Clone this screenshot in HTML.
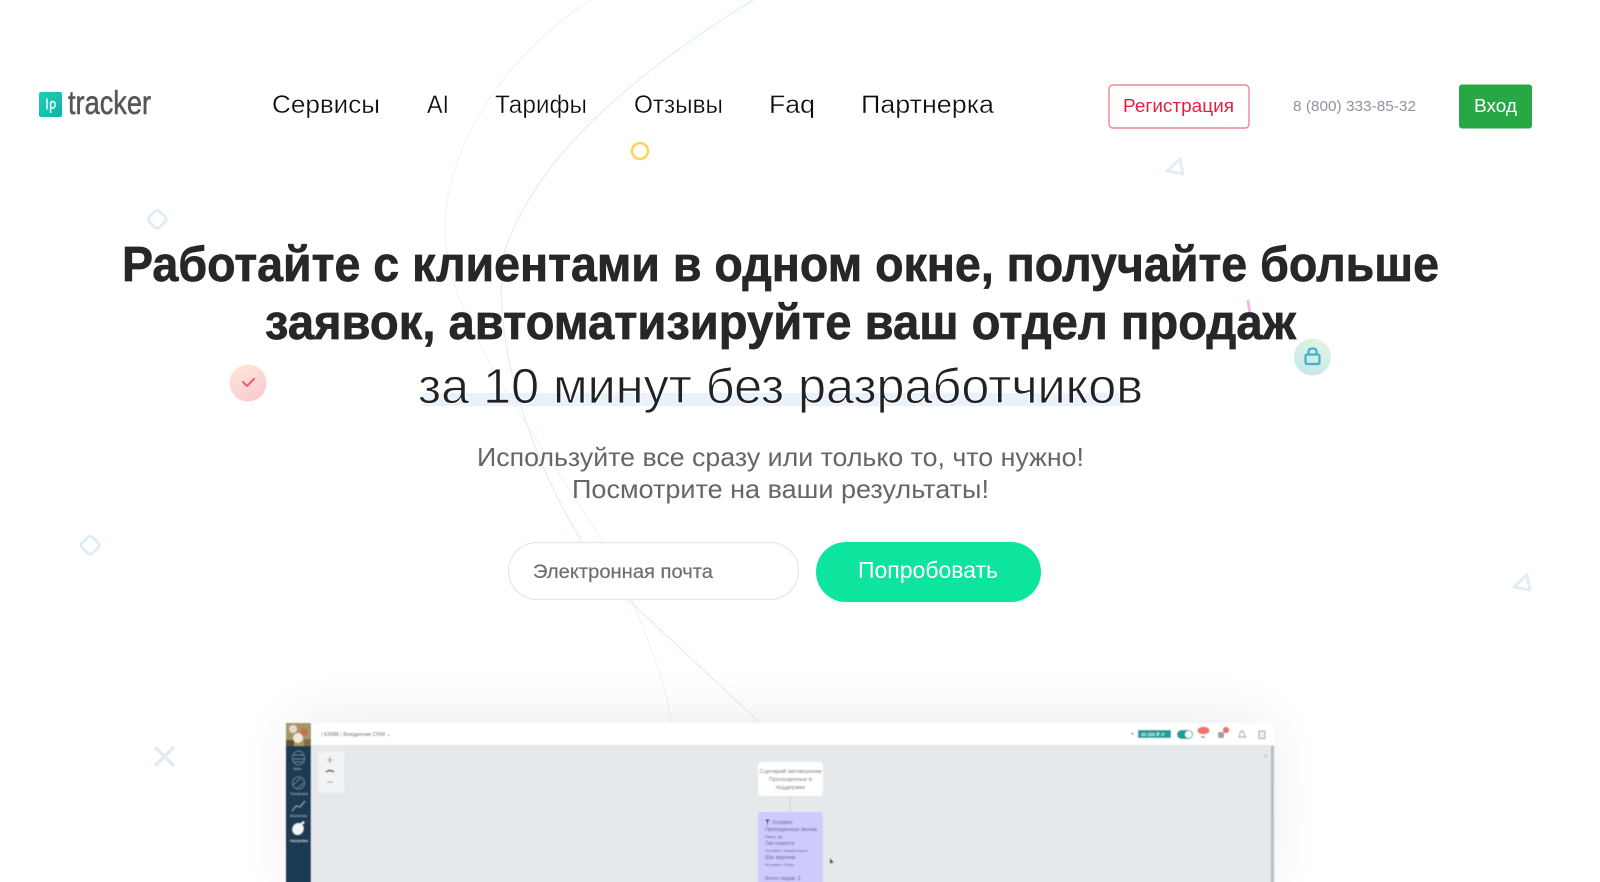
<!DOCTYPE html>
<html lang="ru">
<head>
<meta charset="utf-8">
<title>LPTracker</title>
<style>
html,body{margin:0;padding:0;background:#fff;width:1600px;height:882px;overflow:hidden}
svg{display:block;position:absolute;left:0;top:0;overflow:hidden}
text{font-family:"Liberation Sans","DejaVu Sans",sans-serif}
</style>
</head>
<body>
<svg width="1600" height="882" viewBox="0 0 1600 882" xmlns="http://www.w3.org/2000/svg">
<defs>
<linearGradient id="pk" x1="0.2" y1="0" x2="0.8" y2="1"><stop offset="0" stop-color="#fde6d8"/><stop offset="1" stop-color="#fcc8d2"/></linearGradient>
<linearGradient id="tl" x1="0.7" y1="0" x2="0.3" y2="1"><stop offset="0" stop-color="#e0f5df"/><stop offset="1" stop-color="#c5e6ee"/></linearGradient>
<linearGradient id="lg" x1="0" y1="0" x2="1" y2="1"><stop offset="0" stop-color="#1fcfb8"/><stop offset="1" stop-color="#0bb5a5"/></linearGradient>
<filter id="sh" x="-20%" y="-50%" width="140%" height="200%"><feGaussianBlur stdDeviation="30"/></filter>
<filter id="b1" x="-5%" y="-5%" width="110%" height="110%"><feGaussianBlur stdDeviation="0.6"/></filter>
<filter id="b0"><feGaussianBlur stdDeviation="0.3"/></filter>
<clipPath id="page"><rect x="0" y="0" width="1600" height="882"/></clipPath>
</defs>

<!-- background curves -->
<path d="M753 0C640 70 540 150 505 250C490 320 520 440 582 542C600 572 620 592 634 605L759 722" fill="none" stroke="#dcf5dc" stroke-width="1.2"/>
<path d="M590 0C500 60 445 150 445 230C445 320 540 440 603 542C620 570 628 590 634 605C652 650 668 690 671 722" fill="none" stroke="#f0f2f0" stroke-width="1.1"/>

<!-- logo -->
<g filter="url(#b0)">
<rect x="39" y="92" width="23" height="25" rx="2" fill="url(#lg)"/>
<path d="M47 98.5V109.5" stroke="#d8f6f1" stroke-width="1.7" fill="none"/>
<path d="M50.6 113V103.5Q50.6 101.6 52.6 101.6Q55.2 101.6 55.2 104.6Q55.2 108 52.6 108Q51.4 108 50.6 107.3" stroke="#d8f6f1" stroke-width="1.7" fill="none"/>
<text x="68" y="114" font-size="33" fill="#565656" textLength="83" lengthAdjust="spacingAndGlyphs" stroke="#565656" stroke-width=".5">tracker</text>
</g>

<!-- nav -->
<g font-size="25" fill="#111" stroke="#fff" stroke-width=".3" filter="url(#b0)">
<text x="272" y="113" textLength="108" lengthAdjust="spacingAndGlyphs">Сервисы</text>
<text x="427" y="113" textLength="22" lengthAdjust="spacingAndGlyphs">AI</text>
<text x="495" y="113" textLength="92" lengthAdjust="spacingAndGlyphs">Тарифы</text>
<text x="634" y="113" textLength="89" lengthAdjust="spacingAndGlyphs">Отзывы</text>
<text x="769" y="113" textLength="46" lengthAdjust="spacingAndGlyphs">Faq</text>
<text x="861" y="113" textLength="133" lengthAdjust="spacingAndGlyphs">Партнерка</text>
</g>

<rect x="1109" y="85" width="140" height="43" rx="4" fill="#fff" stroke="#ec8791" stroke-width="1.4"/>
<text x="1123" y="112" font-size="18" fill="#e0223c" textLength="111" lengthAdjust="spacingAndGlyphs">Регистрация</text>
<text x="1293" y="111" font-size="15" fill="#8f93a3" textLength="123" lengthAdjust="spacingAndGlyphs">8 (800) 333-85-32</text>
<rect x="1459" y="84.5" width="73" height="44" rx="3" fill="#28a745"/>
<text x="1474" y="112" font-size="18" fill="#fff" textLength="43" lengthAdjust="spacingAndGlyphs">Вход</text>

<!-- decorative shapes -->
<circle cx="640" cy="151" r="8" fill="none" stroke="#fdd35c" stroke-width="2.6"/>
<path d="M1180 159L1183 174L1167 171Z" fill="none" stroke="#e2eef4" stroke-width="3" stroke-linejoin="round"/>
<path d="M1527 575L1530 590L1514 587Z" fill="none" stroke="#e2eef4" stroke-width="3" stroke-linejoin="round"/>
<rect x="150" y="212" width="14.5" height="14.5" rx="3" transform="rotate(45 157.2 219.2)" fill="none" stroke="#deedf5" stroke-width="2.8"/>
<rect x="83" y="538" width="14.5" height="14.5" rx="3" transform="rotate(45 90.2 545.2)" fill="none" stroke="#deedf5" stroke-width="2.8"/>
<path d="M155 747L174 766M174 747L155 766" stroke="#dfecf2" stroke-width="3.6" fill="none"/>
<path d="M1248 301L1250 314" stroke="#fdb2ec" stroke-width="2.8" stroke-linecap="round"/>

<circle cx="248" cy="383" r="18.5" fill="url(#pk)"/>
<path d="M243 382L247 386L254 379" fill="none" stroke="#f2586f" stroke-width="2" stroke-linecap="round" stroke-linejoin="round"/>
<circle cx="1312.5" cy="357" r="18.5" fill="url(#tl)"/>
<rect x="1305.5" y="354.5" width="14" height="9.5" rx="1.5" fill="none" stroke="#3fb4c6" stroke-width="2.2"/>
<path d="M1308.5 354V351.5Q1308.5 348.5 1312.5 348.5Q1316.5 348.5 1316.5 351.5V354" fill="none" stroke="#3fb4c6" stroke-width="2.2"/>

<!-- headline -->
<g font-size="49" font-weight="700" fill="#272727" stroke="#272727" stroke-width=".7">
<text x="122" y="281" textLength="1317" lengthAdjust="spacingAndGlyphs">Работайте с клиентами в одном окне, получайте больше</text>
<text x="265" y="339" textLength="1031" lengthAdjust="spacingAndGlyphs">заявок, автоматизируйте ваш отдел продаж</text>
</g>
<rect x="422" y="393" width="702" height="13" rx="3" fill="#e8f1fc"/>
<text x="418" y="403" font-size="49" fill="#222" stroke="#fff" stroke-width=".8" textLength="725" lengthAdjust="spacingAndGlyphs">за 10 минут без разработчиков</text>

<!-- subtitle -->
<g font-size="26" fill="#666">
<text x="477" y="466" textLength="607" lengthAdjust="spacingAndGlyphs">Используйте все сразу или только то, что нужно!</text>
<text x="572" y="498" textLength="417" lengthAdjust="spacingAndGlyphs">Посмотрите на ваши результаты!</text>
</g>

<!-- form -->
<rect x="508.5" y="542.5" width="290" height="57" rx="28.5" fill="#fff" stroke="#e6e6e6" stroke-width="1.2"/>
<text x="533" y="578" font-size="19" fill="#6f6f6f" stroke="#6f6f6f" stroke-width=".2" textLength="180" lengthAdjust="spacingAndGlyphs">Электронная почта</text>
<rect x="816" y="542" width="225" height="60" rx="30" fill="#0de59f"/>
<text x="858" y="578" font-size="23" fill="#fff" textLength="140" lengthAdjust="spacingAndGlyphs">Попробовать</text>

<!-- app screenshot -->
<g clip-path="url(#page)">
<rect x="296" y="723" width="969" height="159" fill="#000" opacity=".09" filter="url(#sh)"/>
</g>
<path d="M759 722L742 706" stroke="#dcf5dc" stroke-width="1.2" fill="none"/>
<g clip-path="url(#page)">
<g filter="url(#b1)">
<rect x="286" y="723" width="989" height="165" fill="#e5e9ec"/>
<rect x="286" y="723" width="989" height="22" fill="#fff"/>
<rect x="286" y="745" width="25" height="143" fill="#1b3a52"/>
<rect x="286" y="723" width="25" height="23" fill="#a8946a"/>
<circle cx="293" cy="729" r="4" fill="#e6dcc4"/>
<circle cx="304" cy="732" r="4" fill="#c9683e" opacity=".7"/>
<circle cx="298" cy="738" r="5" fill="#efe8d6"/>
<rect x="286" y="740" width="8" height="6" fill="#5d5230"/>
<rect x="304" y="739" width="7" height="7" fill="#7d7040"/>
<rect x="1271" y="746" width="2.5" height="142" fill="#b5b9bc"/>
<text x="321" y="736" font-size="5.8" fill="#555" textLength="70" lengthAdjust="spacingAndGlyphs">| 63086 | Внедрение CRM ⌄</text>

<!-- sidebar icons -->
<g fill="none" stroke="#5f7a8e" stroke-width="1">
<ellipse cx="298.5" cy="758" rx="6" ry="7"/>
<path d="M293 755H304M293 759H304M293 762H304"/>
<circle cx="298.5" cy="783" r="6"/>
<path d="M293 785L301 778M297 788L304 783"/>
<path d="M292 811L296 806L300 807L305 801" stroke="#8fa3b2"/>
</g>
<g font-size="3.4" fill="#a8b8c4">
<text x="293" y="770">Чаты</text>
<text x="290" y="795">Телефония</text>
<text x="290" y="817">Аналитика</text>
</g>
<ellipse cx="298" cy="829" rx="5.5" ry="6" fill="#f4f6f7" transform="rotate(30 298 829)"/>
<path d="M300 825L304 822" stroke="#f4f6f7" stroke-width="2"/>
<text x="290" y="842" font-size="3.6" fill="#e6ebef">Настройки</text>

<!-- zoom panel -->
<rect x="318" y="752" width="26" height="41" rx="1.5" fill="#f1f3f4"/>
<path d="M327 760H333M330 757V763M327 782H333" stroke="#9a9fa3" stroke-width="1" fill="none"/>
<path d="M326 772Q330 769 334 772" stroke="#444" stroke-width="1.4" fill="none"/>

<!-- flow nodes -->
<rect x="758" y="762" width="65" height="34" rx="4" fill="#fff"/>
<g font-size="5.8" fill="#666" text-anchor="middle">
<text x="790.5" y="773">Сценарий автоворонки</text>
<text x="790.5" y="781">Пропущенные в</text>
<text x="790.5" y="789">поддержке</text>
</g>
<rect x="789.5" y="796" width="1" height="16" fill="#cfd3d6"/>
<path d="M758 890V816Q758 812 762 812H819Q823 812 823 816V890Z" fill="#cfcafc"/>
<g fill="#57537e">
<path d="M765 819.5H770L768 821.5V825H767V821.5Z" fill="#333"/>
<text x="772" y="824" font-size="5.2">Условие:</text>
<text x="765" y="831" font-size="5.2">Пропущенные звонки</text>
<text x="765" y="838" font-size="3.8">Равно: Да</text>
<text x="765" y="845" font-size="5.2">Тип клиента</text>
<text x="765" y="852" font-size="3.8">Не равно: Новый клиент</text>
<text x="765" y="859" font-size="5.2">Шаг воронки</text>
<text x="765" y="866" font-size="3.8">Не равно: Отказ</text>
<text x="765" y="880" font-size="5.2">Всего лидов: 3</text>
</g>
<path d="M830 858L830 864L832 862.5L834 863Z" fill="#222"/>

<!-- top-right toolbar -->
<path d="M1131 733L1134 733L1132.5 735Z" fill="#666"/>
<rect x="1138" y="730" width="33" height="8" fill="#1f9d9a"/>
<text x="1141" y="736" font-size="4.6" font-weight="700" fill="#d6f0ef">30 286 ₽  ↺</text>
<rect x="1177" y="730" width="16" height="9" rx="4.5" fill="#1f9d9a"/>
<circle cx="1188.5" cy="734.5" r="3.6" fill="#fff"/>
<ellipse cx="1203.5" cy="730.5" rx="6" ry="3.8" fill="#f0726a"/>
<path d="M1201 736Q1203 738 1205 737" stroke="#667" stroke-width="1.2" fill="none"/>
<rect x="1218" y="732" width="6" height="6" fill="#9aa0a6"/>
<circle cx="1226" cy="730" r="3.2" fill="#f0726a"/>
<path d="M1239 737Q1240 735 1240 733Q1242 729 1244 733Q1244 735 1245.5 737Z" fill="none" stroke="#8a8f94" stroke-width=".9"/>
<rect x="1259" y="731" width="6" height="7.5" fill="#eceeef" stroke="#92979c" stroke-width=".9"/>
<path d="M1264 754L1267 757M1267 754L1264 757" stroke="#bdc2c6" stroke-width=".8"/>
</g>
</g>
</svg>
</body>
</html>
